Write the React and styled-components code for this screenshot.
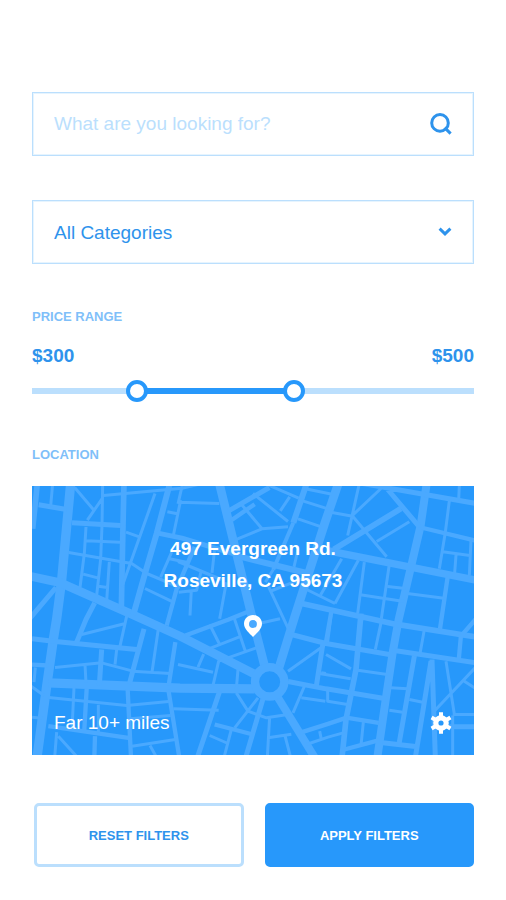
import React, { useState } from "react";
import styled, { createGlobalStyle } from "styled-components";

const blue = "#2798fb";
const blueText = "#2e93ec";
const pale = "#bbdffd";
const soft = "#7fbff9";
const road = "#4aa9ff";

const GlobalStyle = createGlobalStyle`
  *, *::before, *::after { box-sizing: border-box; }
  body {
    margin: 0;
    background: #fff;
    font-family: "Liberation Sans", Arial, sans-serif;
  }
  button, input, select { font-family: inherit; }
`;

const Page = styled.main`
  display: flex;
  flex-direction: column;
  padding: 92px 32px 32px;
`;

const Field = styled.div`
  display: flex;
  align-items: center;
  height: 64px;
  border: 1px solid ${pale};
  outline: 1px solid #e6f4fe;
  outline-offset: -2px;
  margin-bottom: 44px;
`;

const SearchInput = styled.input`
  flex: 1;
  min-width: 0;
  height: 100%;
  padding: 0 0 0 21px;
  border: 0;
  outline: 0;
  background: none;
  color: ${blueText};
  font-size: 19px;
  &::placeholder { color: ${pale}; opacity: 1; }
`;

const IconButton = styled.button`
  display: flex;
  padding: 0;
  border: 0;
  background: none;
  color: ${(p) => p.$color};
  cursor: pointer;
`;

const SearchButton = styled(IconButton)`
  margin-right: 21px;
`;

const SelectStack = styled.div`
  flex: 1;
  height: 100%;
  display: grid;
  align-items: center;
  > * { grid-area: 1 / 1; }
  > svg { justify-self: end; margin-right: 21px; pointer-events: none; }
`;

const Select = styled.select`
  width: 100%;
  height: 100%;
  padding: 0 48px 0 21px;
  border: 0;
  outline: 0;
  appearance: none;
  background: none;
  color: ${blueText};
  font-size: 19px;
`;

const SectionTitle = styled.h2`
  margin: 0;
  color: ${soft};
  font-size: 13px;
  line-height: 18px;
  font-weight: 700;
  text-transform: uppercase;
`;

const PriceSection = styled.section`
  display: flex;
  flex-direction: column;
  margin-bottom: 44px;
`;

const Prices = styled.div`
  display: flex;
  justify-content: space-between;
  margin: 18px 0 12px;
  color: ${blueText};
  font-size: 19px;
  line-height: 24px;
  font-weight: 700;
`;

const Slider = styled.div`
  display: grid;
  align-items: center;
  height: 22px;
  > * { grid-area: 1 / 1; }
`;

const Track = styled.div`
  height: 6px;
  background: ${pale};
`;

const TrackFill = styled.div`
  height: 100%;
  background: ${blue};
`;

const Thumb = styled.input`
  width: 100%;
  height: 22px;
  margin: 0;
  appearance: none;
  background: none;
  pointer-events: none;
  &::-webkit-slider-thumb {
    appearance: none;
    width: 22px;
    height: 22px;
    border: 4px solid ${blue};
    border-radius: 50%;
    background: #fff;
    pointer-events: auto;
    cursor: pointer;
  }
  &::-moz-range-thumb {
    width: 22px;
    height: 22px;
    border: 4px solid ${blue};
    border-radius: 50%;
    background: #fff;
    pointer-events: auto;
  }
`;

const LocationSection = styled.section`
  display: flex;
  flex-direction: column;
  gap: 22px;
  margin-bottom: 48px;
`;

const MapCard = styled.div`
  display: grid;
  background: ${blue};
  > * { grid-area: 1 / 1; }
`;

const MapDrawing = styled.svg`
  display: block;
  width: 100%;
  height: 100%;
  min-height: 0;
  contain: size;
`;

const MapContent = styled.div`
  position: relative;
  display: flex;
  flex-direction: column;
  justify-content: space-between;
  min-height: 269px;
  padding: 47px 22px 20px;
  color: #fff;
`;

const Place = styled.div`
  display: flex;
  flex-direction: column;
  align-items: center;
  gap: 18px;
`;

const Address = styled.address`
  font-size: 19px;
  line-height: 32px;
  font-style: normal;
  font-weight: 700;
  text-align: center;
`;

const MapFooter = styled.div`
  display: flex;
  align-items: center;
  justify-content: space-between;
  font-size: 19px;
  line-height: 24px;
`;

const Actions = styled.div`
  display: grid;
  grid-template-columns: 1fr 1fr;
  gap: 21px;
  padding-left: 2px;
`;

const ActionButton = styled.button`
  height: 64px;
  padding: 0;
  border: 3px solid ${(p) => (p.$primary ? blue : pale)};
  border-radius: 5px;
  background: ${(p) => (p.$primary ? blue : "#fff")};
  color: ${(p) => (p.$primary ? "#fff" : blueText)};
  font-size: 13px;
  font-weight: 700;
  text-transform: uppercase;
  cursor: pointer;
`;

const streets = [
  [28, "M116 -6L89 284L74 400L64 462L44 602L15 816"],
  [26, "M-6 272L85 292L294 384L444 452L668 566"],
  [26, "M562 -6L655 374L700 550"],
  [26, "M919 -6L878 114L788 394L740 550"],
  [24, "M1184 -6L1166 120L1137 244L1100 402L1082 502L1060 650L1036 816"],
  [22, "M890 196L1332 284"],
  [18, "M618 212L830 264"],
  [28, "M50 592L444 608L668 610"],
  [24, "M734 630L848 816"],
  [18, "M824 -6L784 112M412 0L374 144L339 264L304 388"],
  [12, "M784 112L724 252"],
  [17, "M16 -6L2 130M276 -6L273 120L268 370M1107 69L905 192M809 354L1090 416L1332 454M987 384L972 552L942 702L930 816"],
  [15, "M20 58L104 72M72 306L-6 398M188 352L162 402L134 470M120 112L266 120M374 142L450 158L618 209M336 430L292 596M590 76L712 6M1057 0L1162 124M980 -8L1332 54M0 460L70 468L314 492M209 492L202 600M563 617L496 816M693 640L641 816M778 447L882 474L1072 507M1082 494L1332 532M873 472L853 602M768 588L882 610L1062 640M1052 772L1157 784M1147 512L1102 770M1197 527L1150 816M1200 522L1210 816M1252 724L1332 724"],
  [13, "M488 184L434 310L404 420M1167 126L1332 166M1247 274L1224 430M-6 537L50 540M430 470L410 600M164 610L157 732M287 612L297 816M409 612L442 816M49 722L294 758M189 752L187 816M460 450L590 402L655 376M548 717L663 747M947 697L1040 712M937 792L1042 764M1287 448L1280 526M1332 400L1290 448M598 104L668 56M803 742L888 715L942 697M898 378L882 470"],
  [9, "M62 -6L56 62M128 6L184 72M212 -6L210 120L206 220L194 330M210 40L166 104M214 30L450 8L520 -8M162 124L157 204L144 306M162 166L264 170M110 201L264 228L299 234L344 264L444 306M154 266L200 278M199 302L226 306M232 229L224 346M369 24L316 174L270 304M282 140L322 154M406 79L436 85M446 44L424 150M386 275L419 200M339 309L424 350M409 219L470 232"],
  [9, "M452 -6L438 55M440 50L562 54M628 56L690 130M663 24L768 108M608 164L690 130L768 124M773 34L745 76M703 -4L800 38M820 10L900 26M812 46L888 70M798 100L868 124M438 228L568 282M548 190L540 262M583 290L563 400M478 314L474 390M508 254L494 314L440 320M710 304L772 436M713 318L810 280M724 252L700 290M798 192L786 244"],
  [9, "M982 -6L947 150M896 80L962 92M1047 9L962 89M962 92L1064 214M1132 109L1034 168M1282 0L1280 44M1252 46L1240 140L1222 250M1317 165L1312 270M1232 199L1314 210M1272 209L1268 262M979 224L909 354M997 230L977 384M1072 236L1048 400M1067 303L1120 309M985 328L1116 348M1126 324L1236 338M824 312L909 354M929 220L866 328"],
  [9, "M149 447L280 414M284 392L264 482M254 492L249 537M69 546L209 532L300 556M159 537L162 592M300 557L416 564M379 430L360 560M-6 600L36 630M50 636L284 660L410 648M126 606L120 732M199 658L199 740M424 670L560 674M74 740L68 816M79 752L135 814M300 782L430 762M354 780L374 816M294 700L416 690M0 695L30 698M10 546L6 590M438 537L543 560"],
  [9, "M533 417L563 477M498 545L515 506M513 497L628 452M606 396L640 497M673 487L560 527L543 600M618 552L613 610M678 637L608 727M613 622L648 677L703 697L768 687M533 750L588 774M598 732L576 816M713 692L706 816M708 757L778 746M758 747L775 812M768 557L868 486M818 600L783 682M808 637L880 647M823 777L888 755L942 740M863 737L868 762M868 562L882 564M680 414L744 400"],
  [9, "M897 390L887 470M1047 412L1030 492M1177 432L1164 505M882 507L957 550M977 554L1066 567M862 564L956 580M887 607L887 647L947 657M994 710L987 780M1077 607L1126 610M1072 674L1112 680M1132 642L1172 650M1242 527L1267 686M1332 544L1208 676M1297 587L1332 610M1262 687L1332 687M1262 690L1262 816"],
];

function StreetMap() {
  return (
    <MapDrawing viewBox="0 0 1326 810" preserveAspectRatio="xMidYMid slice" aria-hidden="true">
      <g fill="none" stroke={road} strokeLinejoin="round">
        {streets.map(([width, d]) => (
          <path key={d} d={d} strokeWidth={width} />
        ))}
      </g>
      <circle cx="713" cy="589" r="44" fill={blue} stroke={road} strokeWidth="25" />
    </MapDrawing>
  );
}

function SearchIcon() {
  return (
    <svg width="22" height="22" viewBox="0 0 22 22" fill="none" stroke="currentColor" strokeWidth="3" aria-hidden="true">
      <circle cx="10" cy="9.9" r="8.3" />
      <path d="M14.6 14.6L20.6 20.6" />
    </svg>
  );
}

function ChevronIcon() {
  return (
    <svg width="14" height="10" viewBox="0 0 14 10" fill="none" stroke={blueText} strokeWidth="3" aria-hidden="true">
      <path d="M1.6 1.6L7 6.8L12.4 1.6" />
    </svg>
  );
}

function PinIcon() {
  return (
    <svg width="18" height="22" viewBox="0 0 18 22" fill="#fff" aria-hidden="true">
      <path
        fillRule="evenodd"
        d="M9 0C4 0 0 3.9 0 8.8C0 14.2 5.6 18.4 9 22C12.4 18.4 18 14.2 18 8.8C18 3.9 14 0 9 0ZM9 5.1A3.9 3.9 0 1 1 9 12.9A3.9 3.9 0 1 1 9 5.1Z"
      />
    </svg>
  );
}

function GearIcon() {
  return (
    <svg width="22" height="22" viewBox="0 0 22 22" fill="none" stroke="currentColor" aria-hidden="true">
      <circle cx="11" cy="11" r="5.2" strokeWidth="5.2" />
      <path
        strokeWidth="4"
        d="M11 0.2V4.5M11 17.5V21.8M1.6 5.6L5.4 7.8M16.6 14.2L20.4 16.4M1.6 16.4L5.4 14.2M16.6 7.8L20.4 5.6"
      />
    </svg>
  );
}

const MIN = 180;
const MAX = 716;

function PriceRange({ low, high, onLow, onHigh }) {
  const start = ((low - MIN) / (MAX - MIN)) * 100;
  const end = ((high - MIN) / (MAX - MIN)) * 100;
  return (
    <PriceSection>
      <SectionTitle>Price range</SectionTitle>
      <Prices>
        <span>${low}</span>
        <span>${high}</span>
      </Prices>
      <Slider>
        <Track>
          <TrackFill style={{ marginLeft: `${start}%`, width: `${end - start}%` }} />
        </Track>
        <Thumb
          type="range"
          aria-label="Lowest price"
          min={MIN}
          max={MAX}
          value={low}
          onChange={(e) => onLow(Math.min(Number(e.target.value), high))}
        />
        <Thumb
          type="range"
          aria-label="Highest price"
          min={MIN}
          max={MAX}
          value={high}
          onChange={(e) => onHigh(Math.max(Number(e.target.value), low))}
        />
      </Slider>
    </PriceSection>
  );
}

export default function App() {
  const [query, setQuery] = useState("");
  const [low, setLow] = useState(300);
  const [high, setHigh] = useState(500);

  const reset = () => {
    setQuery("");
    setLow(300);
    setHigh(500);
  };

  return (
    <>
      <GlobalStyle />
      <Page>
        <Field>
          <SearchInput
            type="text"
            aria-label="Search"
            placeholder="What are you looking for?"
            value={query}
            onChange={(e) => setQuery(e.target.value)}
          />
          <SearchButton type="button" aria-label="Search" $color={blueText}>
            <SearchIcon />
          </SearchButton>
        </Field>
        <Field>
          <SelectStack>
            <Select aria-label="Category">
              <option>All Categories</option>
            </Select>
            <ChevronIcon />
          </SelectStack>
        </Field>
        <PriceRange low={low} high={high} onLow={setLow} onHigh={setHigh} />
        <LocationSection>
          <SectionTitle>Location</SectionTitle>
          <MapCard>
            <StreetMap />
            <MapContent>
              <Place>
                <Address>
                  497 Evergreen Rd.
                  <br />
                  Roseville, CA 95673
                </Address>
                <PinIcon />
              </Place>
              <MapFooter>
                <span>Far 10+ miles</span>
                <IconButton type="button" aria-label="Location settings" $color="#fff">
                  <GearIcon />
                </IconButton>
              </MapFooter>
            </MapContent>
          </MapCard>
        </LocationSection>
        <Actions>
          <ActionButton type="button" onClick={reset}>Reset filters</ActionButton>
          <ActionButton type="button" $primary>Apply filters</ActionButton>
        </Actions>
      </Page>
    </>
  );
}
